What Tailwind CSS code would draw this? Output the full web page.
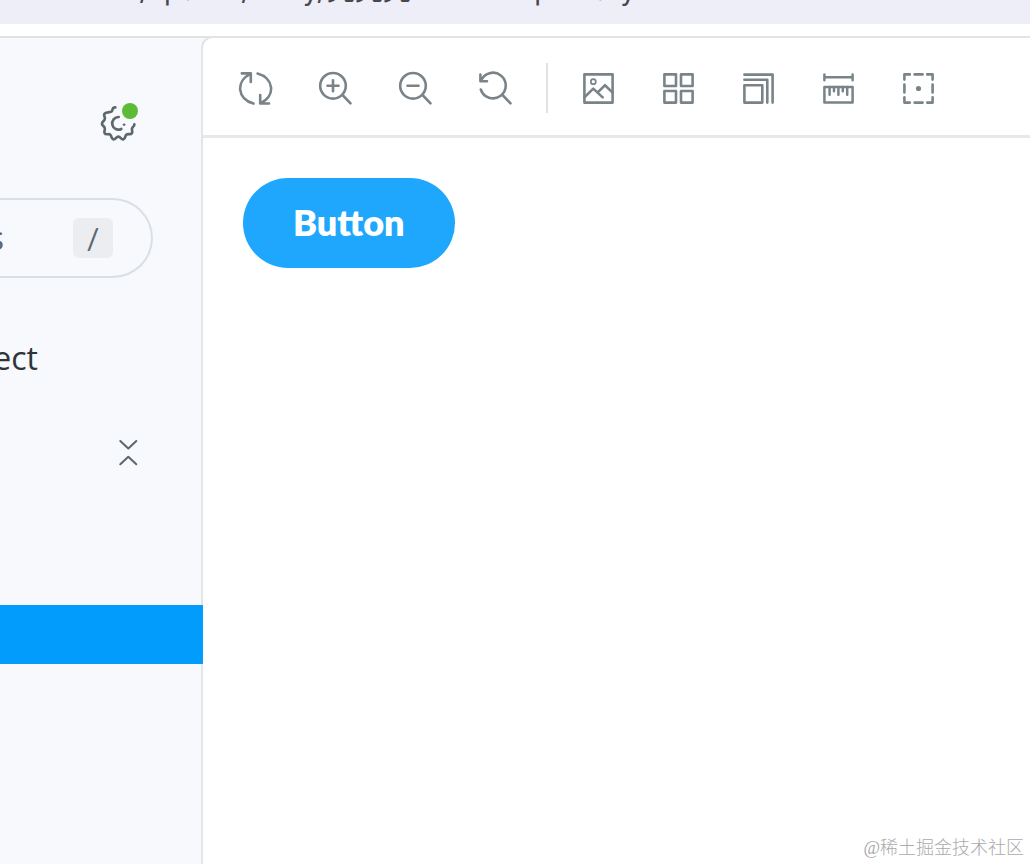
<!DOCTYPE html>
<html lang="en">
<head>
<meta charset="utf-8">
<title>Button</title>
<script src="https://cdn.jsdelivr.net/npm/@tailwindcss/browser@4"></script>
</head>
<body class="flex h-screen flex-col overflow-hidden bg-white font-[family-name:'Open_Sans','Noto_Sans_CJK_SC',sans-serif] text-[#2e3438]">
<header class="flex h-6 shrink-0 items-end overflow-hidden bg-[#eeeef8]">
  <div class="flex w-[636px] items-baseline justify-end pb-[18px] font-[family-name:Inter,sans-serif] text-[28px] leading-8 whitespace-nowrap text-[#48464f]"><span>localhost:6006/?path=/story/</span><span class="font-[family-name:'Noto_Sans_CJK_SC',sans-serif]">壳壳壳</span><span>-button--primary</span></div>
</header>
<div class="mt-3 flex min-h-0 flex-1 border-t-2 border-[#dfe1e3] bg-[#f7f9fd]">
  <aside class="relative flex w-[203px] shrink-0 flex-col overflow-hidden">
    <div class="flex justify-end pt-[65px] pr-[65px]">
      <button type="button" aria-label="Settings" class="relative size-10 text-[#5c666d]">
        <svg class="size-10" viewBox="0 0 120 120" fill="none" stroke="currentColor" stroke-width="8" stroke-linecap="round" stroke-linejoin="round">
          <path d="M52 13C42 12 45 22 40 26C33 30 23 26 19 33C16 40 24 44 20 50C17 55 12 57 12 62C12 68 18 69 20 74C23 81 16 85 20 91C24 97 32 91 37 95C42 99 38 107 46 109C53 110 54 101 61 101C68 101 69 110 76 109C84 107 80 99 85 95C91 91 98 97 102 90C105 84 99 80 103 74C106 70 110 69 109 64"/>
          <path d="M62 42A19 19 0 1 0 70 78"/>
          <circle cx="78" cy="65" r="2.5" fill="currentColor" stroke-width="3"/>
        </svg>
        <span class="absolute top-0 right-0 size-4 rounded-full bg-[#5dbb38]"></span>
      </button>
    </div>
    <div class="mt-[55px] mr-[50px] flex h-20 items-center justify-end rounded-r-full border-2 border-l-0 border-[#d9e0e5] pr-[38px]">
      <label for="find" class="mr-[69px] text-[32px] whitespace-nowrap text-[#5c666d]">Find components</label>
      <input id="find" type="search" class="sr-only">
      <kbd class="flex size-10 shrink-0 items-center justify-center rounded-md bg-[#ebedf0] font-[family-name:Lato,sans-serif] text-[28px] font-medium text-[#5c666d]">/</kbd>
    </div>
    <a href="#" class="mt-15 mr-[165px] flex h-10 items-center justify-end text-[32px] whitespace-nowrap">Configure your project</a>
    <div class="mt-[55px] flex justify-end pr-[65px]">
      <button type="button" aria-label="Collapse all" class="flex h-10 w-5 items-center justify-center text-[#5c666d]">
        <svg class="h-7 w-5" viewBox="0 0 20 28" fill="none" stroke="currentColor" stroke-width="2" stroke-linecap="round" stroke-linejoin="round"><path d="M2.3 2l8 7.5 8-7.5M2.3 25.3l8-7.5 8 7.5"/></svg>
      </button>
    </div>
    <a href="#" aria-label="Primary" aria-current="page" class="mt-[132px] block h-[59px] bg-[#029cfd]"></a>
  </aside>
  <main class="flex min-w-0 flex-1 flex-col rounded-tl-[10px] bg-white shadow-[0_0_0_2px_#e1e4e8]">
    <div role="toolbar" aria-label="Canvas tools" class="flex h-25 shrink-0 items-center border-b-3 border-[#e6e9eb] pl-[13px] pt-[3px] text-[#798388]">
      <button type="button" aria-label="Remount" class="flex w-20 shrink-0 justify-center"><svg class="size-9" viewBox="0 0 36 36" fill="none" stroke="currentColor" stroke-width="2.6" stroke-linecap="round" stroke-linejoin="round"><path d="M15.5 33.6C-1 29 -2.5 11 12.6 3.8M3.8 3.4H12.8V12M19.6 3.6C36 8 38 26 22.6 33.2M31 33.5H22.2V25"/></svg></button>
      <button type="button" aria-label="Zoom in" class="flex w-20 shrink-0 justify-center"><svg class="size-9" viewBox="0 0 36 36" fill="none" stroke="currentColor" stroke-width="2.6" stroke-linecap="round"><circle cx="15" cy="15.8" r="12.8"/><path d="M24.5 25l8 8.3M9.5 15.8h11M15 10.3v11"/></svg></button>
      <button type="button" aria-label="Zoom out" class="flex w-20 shrink-0 justify-center"><svg class="size-9" viewBox="0 0 36 36" fill="none" stroke="currentColor" stroke-width="2.6" stroke-linecap="round"><circle cx="15" cy="15.8" r="12.8"/><path d="M24.5 25l8 8.3M9.5 15.8h11"/></svg></button>
      <button type="button" aria-label="Reset zoom" class="flex w-20 shrink-0 justify-center"><svg class="size-9" viewBox="0 0 36 36" fill="none" stroke="currentColor" stroke-width="2.6" stroke-linecap="round" stroke-linejoin="round"><path d="M2.8 19.5A12.8 12.8 0 1 0 3 11M2.4 4.5V11.3H9M24.5 25l8 8.3"/></svg></button>
      <span class="mr-[11px] ml-[10px] h-[50px] w-0.5 shrink-0 bg-[#dfe2e4]"></span>
      <button type="button" aria-label="Background" class="flex w-20 shrink-0 justify-center"><svg class="size-9" viewBox="0 0 36 36" fill="none" stroke="currentColor" stroke-width="2.6" stroke-linejoin="round"><rect x="3.4" y="4.4" width="28.2" height="28.2"/><circle cx="12.3" cy="11.7" r="2.5" stroke-width="1.7"/><path stroke-linecap="round" d="M3.4 27.2l8.9-8.6 9.4 8.8M16.7 22.4l7.3-7.2 7.6 7.4"/></svg></button>
      <button type="button" aria-label="Grid" class="flex w-20 shrink-0 justify-center"><svg class="size-9" viewBox="0 0 36 36" fill="none" stroke="currentColor" stroke-width="2.6" stroke-linejoin="round"><rect x="3.4" y="4.4" width="11.6" height="11.6"/><rect x="20" y="4.4" width="11.6" height="11.6"/><rect x="3.4" y="21" width="11.6" height="11.6"/><rect x="20" y="21" width="11.6" height="11.6"/></svg></button>
      <button type="button" aria-label="Viewport" class="flex w-20 shrink-0 justify-center"><svg class="size-9" viewBox="0 0 36 36" fill="none" stroke="currentColor" stroke-width="2.6" stroke-linecap="round" stroke-linejoin="round"><rect x="3.4" y="15.2" width="17.9" height="17.4"/><path d="M3.4 9.8H26.3V32.6M3.4 4.6H31.6V32.6"/></svg></button>
      <button type="button" aria-label="Measure" class="flex w-20 shrink-0 justify-center"><svg class="size-9" viewBox="0 0 36 36" fill="none" stroke="currentColor" stroke-width="2.5" stroke-linecap="round" stroke-linejoin="round"><rect x="3.4" y="17" width="28.2" height="15.6"/><path d="M3.4 4.6v5.6M31.6 4.6v5.6M3.4 7.3h28.2M8.6 17v7.8M13 17v4.2M17.4 17v7.8M21.8 17v4.2M26.2 17v7.8"/></svg></button>
      <button type="button" aria-label="Outline" class="flex w-20 shrink-0 justify-center"><svg class="size-9" viewBox="0 0 36 36" fill="none" stroke="currentColor" stroke-width="2.6" stroke-linecap="round" stroke-linejoin="round"><path d="M8.8 4.4H3.4V9.6M26.2 4.4h5.4v5.2M3.4 27.4v5.2h5.4M26.2 32.6h5.4v-5.2M13.6 4.4h8M13.6 32.6h8M3.4 14.6v7.8M31.6 14.6v7.8"/><circle cx="17.5" cy="18.5" r="1.3" fill="currentColor"/></svg></button>
    </div>
    <div class="flex-1 p-10">
      <button type="button" class="h-[90px] rounded-full bg-[#1ea7fd] px-[50px] pb-0.5 font-[family-name:Lato,sans-serif] text-[36px] font-extrabold text-white">Button</button>
    </div>
    <p class="self-end pr-1.5 pb-1 font-[family-name:'Liberation_Serif','Noto_Sans_CJK_SC',serif] text-lg leading-6 font-light text-[#aaaaaa]">@稀土掘金技术社区</p>
  </main>
</div>
</body>
</html>
